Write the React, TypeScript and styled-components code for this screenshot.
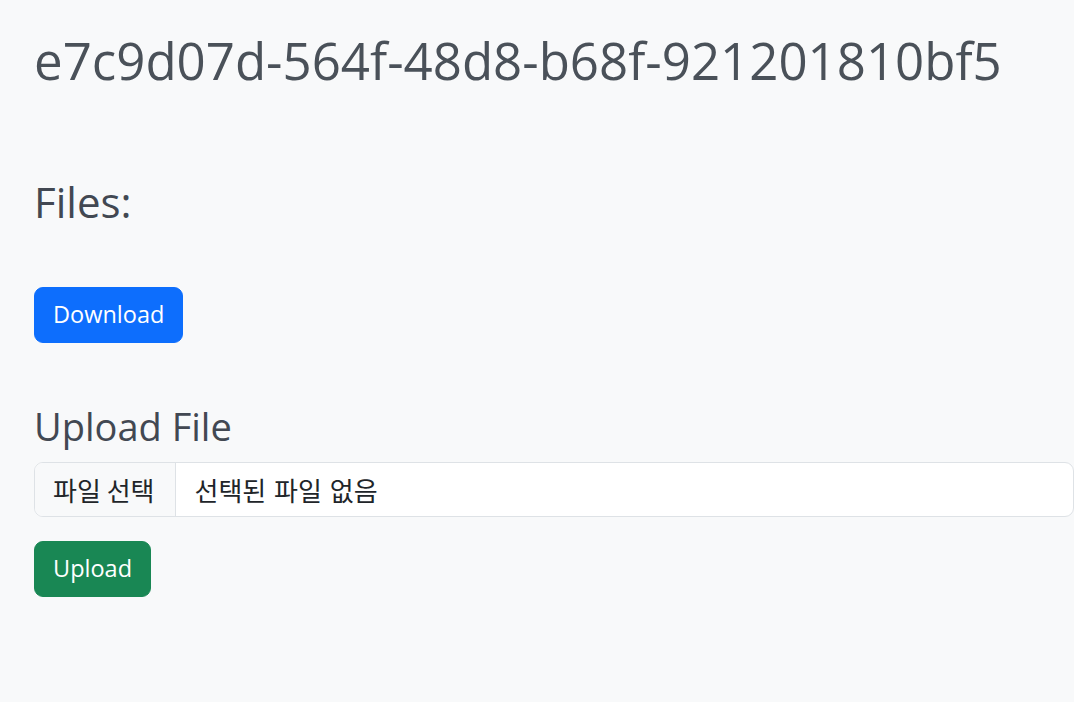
import React from "react";
import styled, { createGlobalStyle } from "styled-components";

const GlobalStyle = createGlobalStyle`
  html, body {
    margin: 0;
    padding: 0;
    background: #f8f9fa;
    overflow: hidden;
  }
  body {
    font-family: "Open Sans", "Noto Sans CJK KR", sans-serif;
    color: #212529;
  }
`;

const Page = styled.main`
  display: flex;
  flex-direction: column;
  align-items: flex-start;
  padding: 0 0 0 34px;
  width: 1040px;
`;

const Title = styled.h1`
  margin: 30px 0 0;
  font-size: 51px;
  font-weight: 400;
  line-height: 1.2;
  color: #4a5159;
`;

const SectionTitle = styled.h2<{ $size: number; $top: number }>`
  margin: ${(p) => p.$top}px 0 0;
  font-size: ${(p) => p.$size}px;
  font-weight: 400;
  line-height: 1.2;
  color: #424852;
`;

const Button = styled.button<{ $bg: string; $top: number }>`
  margin-top: ${(p) => p.$top}px;
  height: 56px;
  padding: 0 18px;
  border: 1px solid ${(p) => p.$bg};
  border-radius: 9px;
  background: ${(p) => p.$bg};
  color: #fff;
  font-family: "Open Sans", sans-serif;
  font-size: 23.5px;
  line-height: 1;
  cursor: pointer;
`;

const FileField = styled.label`
  margin-top: 13px;
  display: flex;
  align-items: stretch;
  width: 100%;
  height: 55px;
  box-sizing: border-box;
  border: 1px solid #dee2e6;
  border-radius: 9px;
  background: #fff;
  overflow: hidden;
  cursor: pointer;
`;

const FilePick = styled.span`
  display: flex;
  align-items: center;
  padding: 0 20px 0 18px;
  background: #f8f9fa;
  border-right: 1px solid #dee2e6;
  font-family: "Noto Sans CJK KR", sans-serif;
  font-size: 26px;
  color: #212529;
`;

const FileName = styled.span`
  display: flex;
  align-items: center;
  padding-left: 19px;
  font-family: "Noto Sans CJK KR", sans-serif;
  font-size: 26px;
  word-spacing: 2px;
  color: #212529;
`;

export default function App() {
  return (
    <>
      <GlobalStyle />
      <Page>
        <Title>e7c9d07d-564f-48d8-b68f-921201810bf5</Title>
        <SectionTitle $size={42} $top={86}>Files:</SectionTitle>
        <Button $bg="#0d6efd" $top={59}>Download</Button>
        <SectionTitle $size={38} $top={61}>Upload File</SectionTitle>
        <FileField>
          <FilePick>파일 선택</FilePick>
          <FileName>선택된 파일 없음</FileName>
        </FileField>
        <Button $bg="#198754" $top={24}>Upload</Button>
      </Page>
    </>
  );
}
